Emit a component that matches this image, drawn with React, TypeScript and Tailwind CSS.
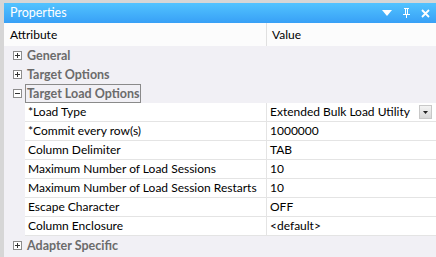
import React from 'react';

const font = { fontFamily: 'Lato, "Noto Sans", sans-serif' };

function Box({ open }: { open?: boolean }) {
  return (
    <svg width="9" height="9" viewBox="0 0 9 9" className="shrink-0">
      <rect x="0.5" y="0.5" width="8" height="8" fill="#fff" stroke="#8c8c8c" />
      <line x1="2" y1="4.5" x2="7" y2="4.5" stroke="#333" />
      {!open && <line x1="4.5" y1="2" x2="4.5" y2="7" stroke="#333" />}
    </svg>
  );
}

function Category({ label, open, selected }: { label: string; open?: boolean; selected?: boolean }) {
  return (
    <div className="flex items-center h-[19px] bg-[#f1f0f5]">
      <div className="w-[21px] flex justify-center pl-[5px]">
        <Box open={open} />
      </div>
      <span
        className={`font-bold text-[12.5px] text-[#6b6b6b] leading-[17px] px-[1px] whitespace-nowrap ${
          selected ? 'border border-[#8a8a8a]' : 'border border-transparent'
        }`}
      >
        {label}
      </span>
    </div>
  );
}

function Prop({ name, value, dropdown }: { name: string; value: string; dropdown?: boolean }) {
  return (
    <div className="flex h-[19px] bg-[#f1f0f5]">
      <div className="w-[21px] shrink-0" />
      <div className="w-[242px] shrink-0 bg-white border-b border-r border-[#e4e4e4] pl-[3px] text-[12px] leading-[18px] text-black whitespace-nowrap overflow-hidden">
        {name}
      </div>
      <div className="flex-1 flex items-center bg-white border-b border-[#e4e4e4] pl-[3px] text-[12px] leading-[18px] text-black whitespace-nowrap">
        <span className="flex-1">{value}</span>
        {dropdown && (
          <div className="w-[13px] h-[14px] mr-[4px] bg-gradient-to-b from-[#f4f4f4] to-[#d8d8d8] border border-[#c8c8c8] flex items-center justify-center">
            <svg width="5" height="3" viewBox="0 0 5 3">
              <path d="M0 0h5L2.5 3z" fill="#222" />
            </svg>
          </div>
        )}
      </div>
    </div>
  );
}

export default function App() {
  return (
    <div className="w-[436px] h-[257px] bg-[#d6d6d6] pt-[3px] pl-[4px] overflow-hidden" style={font}>
      <div className="h-[20px] bg-gradient-to-b from-[#52c3ff] to-[#38a0f6] flex items-center pl-[6px] pr-[6px]">
        <span className="text-white text-[12.5px] flex-1 leading-none">Properties</span>
        <svg width="10" height="6" viewBox="0 0 10 6" className="mr-[10px]">
          <path d="M0 0h10L5 6z" fill="#fff" />
        </svg>
        <svg width="9" height="10" viewBox="0 0 9 10" className="mr-[10px]">
          <path d="M2 0h5v1H6v5h2v1H5v3H4V7H1V6h2V1H2z M4 1v5h1V1z" fill="#fff" />
        </svg>
        <svg width="9" height="9" viewBox="0 0 9 9">
          <path d="M1 1l7 7M8 1L1 8" stroke="#fff" strokeWidth="1.8" />
        </svg>
      </div>
      <div className="bg-[#f1f0f5]">
        <div className="flex h-[23px] bg-[#fcfcfc] text-[12px] text-black">
          <div className="w-[263px] border-r border-[#e0e0e0] pl-[6px] flex items-center">Attribute</div>
          <div className="flex-1 pl-[5px] flex items-center">Value</div>
        </div>
        <Category label="General" />
        <Category label="Target Options" />
        <Category label="Target Load Options" open selected />
        <Prop name="*Load Type" value="Extended Bulk Load Utility" dropdown />
        <Prop name="*Commit every row(s)" value="1000000" />
        <Prop name="Column Delimiter" value="TAB" />
        <Prop name="Maximum Number of Load Sessions" value="10" />
        <Prop name="Maximum Number of Load Session Restarts" value="10" />
        <Prop name="Escape Character" value="OFF" />
        <Prop name="Column Enclosure" value="<default>" />
        <Category label="Adapter Specific" />
        <div className="h-[20px]" />
      </div>
    </div>
  );
}
